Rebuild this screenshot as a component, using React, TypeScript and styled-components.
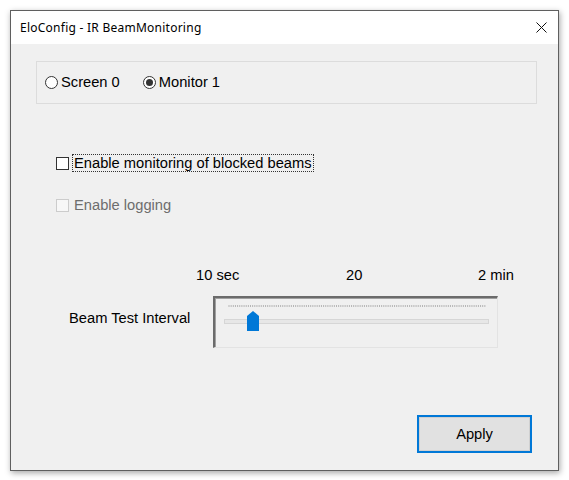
import React from "react";
import styled, { createGlobalStyle } from "styled-components";

const Global = createGlobalStyle`
  html, body { margin: 0; padding: 0; background: #ffffff; }
  body { font-family: "Liberation Sans", Arial, sans-serif; }
  * { box-sizing: border-box; }
`;

const Page = styled.div`
  padding: 10px;
  width: 569px;
  height: 480px;
`;

const Window = styled.div`
  width: 549px;
  height: 461px;
  border: 1px solid #5f5f5f;
  box-shadow: 1px 2px 6px rgba(0, 0, 0, 0.35);
  display: flex;
  flex-direction: column;
  background: #f0f0f0;
`;

const TitleBar = styled.div`
  height: 33px;
  background: #ffffff;
  display: flex;
  align-items: center;
  justify-content: space-between;
  padding: 0 11px 0 9px;
  font-family: "Noto Sans", "Open Sans", sans-serif;
  font-size: 12px;
  letter-spacing: 0.25px;
  color: #000;
`;

const Close = styled.svg`
  width: 11px;
  height: 11px;
  margin-top: -1px;
`;

const Body = styled.div`
  flex: 1;
  display: flex;
  flex-direction: column;
  font-size: 14.7px;
  color: #000;
`;

const GroupBox = styled.div`
  margin: 17px 21px 0 25px;
  height: 43px;
  border: 1px solid #dcdcdc;
  display: flex;
  align-items: center;
  padding-left: 8px;
  gap: 23px;
`;

const Option = styled.label`
  display: flex;
  align-items: center;
  gap: 3px;
  line-height: 17px;
`;

const RadioDot = styled.span<{ $on?: boolean }>`
  width: 13px;
  height: 13px;
  border-radius: 50%;
  border: 1px solid #333;
  background: #fff;
  display: flex;
  align-items: center;
  justify-content: center;
  &::after {
    content: "";
    width: 7px;
    height: 7px;
    border-radius: 50%;
    background: ${(p) => (p.$on ? "#333" : "transparent")};
  }
`;

const CheckRow = styled.div<{ $top: number }>`
  margin: ${(p) => p.$top}px 0 0 45px;
  display: flex;
  align-items: center;
  gap: 3px;
  height: 18px;
`;

const Box = styled.span<{ $disabled?: boolean }>`
  width: 13px;
  height: 13px;
  border: 1px solid ${(p) => (p.$disabled ? "#cccccc" : "#333")};
  background: ${(p) => (p.$disabled ? "#f7f7f7" : "#fff")};
`;

const CheckText = styled.span<{ $disabled?: boolean; $focus?: boolean }>`
  color: ${(p) => (p.$disabled ? "#6d6d6d" : "#000")};
  line-height: 16px;
  padding: 0 1px;
  border: 1px dotted ${(p) => (p.$focus ? "#333" : "transparent")};
`;

const ScaleRow = styled.div`
  margin: 53px 0 0 185px;
  width: 318px;
  display: grid;
  grid-template-columns: 150px 1fr auto;
  line-height: 17px;
`;

const SliderRow = styled.div`
  margin: 12px 0 0 58px;
  display: grid;
  grid-template-columns: 144px 285px;
`;

const SliderLabel = styled.div`
  margin-top: 14px;
  line-height: 17px;
`;

const TrackBox = styled.div`
  height: 52px;
  border-top: 2px solid #6b6b6b;
  border-left: 2px solid #6b6b6b;
  border-right: 1px solid #e3e3e3;
  border-bottom: 1px solid #e3e3e3;
  box-shadow: inset 1px 1px 0 #a0a0a0;
  padding: 6px 0 0 9px;
  display: flex;
  flex-direction: column;
`;

const Ticks = styled.svg`
  width: 260px;
  height: 4px;
  margin-left: 4px;
`;

const Track = styled.div`
  position: relative;
  margin-top: 11px;
  width: 265px;
  height: 5px;
  border: 1px solid #d6d6d6;
  background: #e7e7e7;
`;

const Thumb = styled.svg`
  position: absolute;
  left: 22px;
  top: -9px;
  width: 12px;
  height: 20px;
`;

const ButtonRow = styled.div`
  margin-top: auto;
  padding: 0 26px 17px 0;
  display: flex;
  justify-content: flex-end;
`;

const Button = styled.button`
  width: 115px;
  height: 38px;
  border: 2px solid #0078d7;
  background: #e1e1e1;
  box-shadow: inset 0 0 0 1px #d0d0d0;
  font-family: "Liberation Sans", Arial, sans-serif;
  font-size: 14.7px;
  color: #000;
  padding: 0;
`;

export default function App() {
  const ticks: number[] = [];
  for (let x = 0.5; x < 258; x += 2.15) ticks.push(x);
  return (
    <>
      <Global />
      <Page>
        <Window>
          <TitleBar>
            <span>EloConfig - IR BeamMonitoring</span>
            <Close viewBox="0 0 11 11">
              <path d="M0.5 0.5 L10.5 10.5 M10.5 0.5 L0.5 10.5" stroke="#111" strokeWidth="1" fill="none" />
            </Close>
          </TitleBar>
          <Body>
            <GroupBox>
              <Option>
                <RadioDot />
                Screen 0
              </Option>
              <Option>
                <RadioDot $on />
                Monitor 1
              </Option>
            </GroupBox>
            <CheckRow $top={50}>
              <Box />
              <CheckText $focus>Enable monitoring of blocked beams</CheckText>
            </CheckRow>
            <CheckRow $top={24}>
              <Box $disabled />
              <CheckText $disabled>Enable logging</CheckText>
            </CheckRow>
            <ScaleRow>
              <span>10 sec</span>
              <span>20</span>
              <span>2 min</span>
            </ScaleRow>
            <SliderRow>
              <SliderLabel>Beam Test Interval</SliderLabel>
              <TrackBox>
                <Ticks viewBox="0 0 260 4">
                  {ticks.map((x) => (
                    <rect key={x} x={x} y={1} width={1} height={2} fill="#b5b5b5" />
                  ))}
                </Ticks>
                <Track>
                  <Thumb viewBox="0 0 12 20">
                    <path d="M0 5 L6 0 L12 5 L12 20 L0 20 Z" fill="#0078d7" />
                  </Thumb>
                </Track>
              </TrackBox>
            </SliderRow>
            <ButtonRow>
              <Button>Apply</Button>
            </ButtonRow>
          </Body>
        </Window>
      </Page>
    </>
  );
}
